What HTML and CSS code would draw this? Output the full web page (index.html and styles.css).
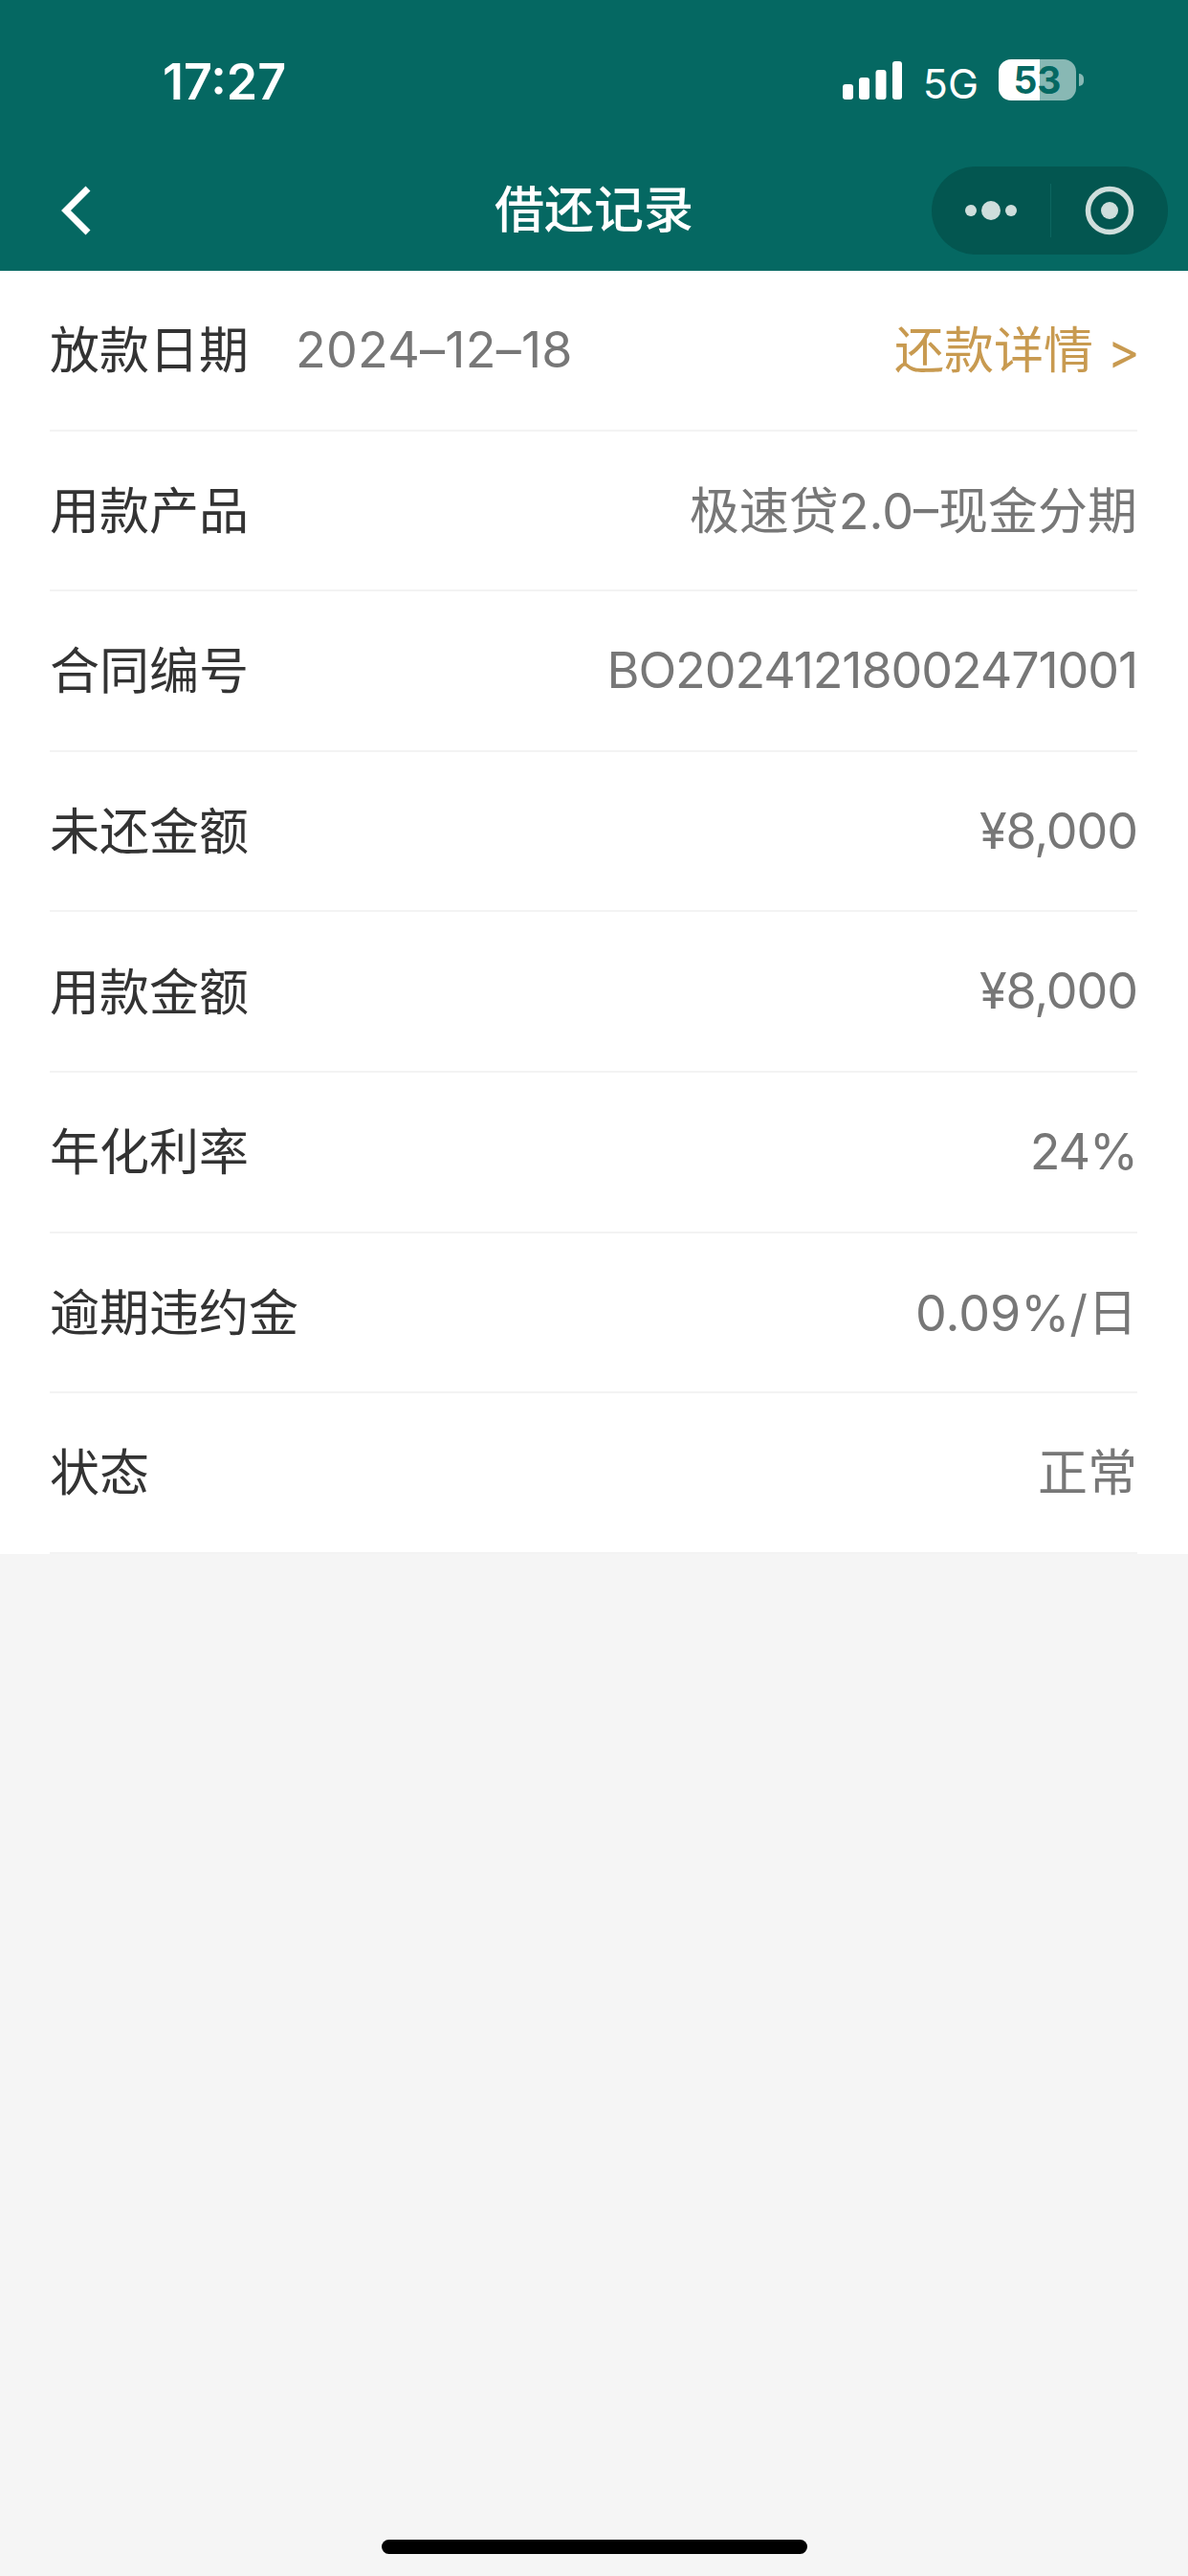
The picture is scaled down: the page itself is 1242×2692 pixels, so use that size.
FILE: index.html
```html
<!DOCTYPE html>
<html lang="zh-CN">
<head>
    <meta charset="UTF-8">
    <meta name="viewport" content="width=device-width, initial-scale=1.0">
    <title>借还记录</title>
    <link rel="stylesheet" href="styles.css">
</head>
<body>
    <div class="page">
        <header class="top">
            <div class="status-bar">
                <span class="time">17:27</span>
                <div class="status-right">
                    <svg class="signal" width="62" height="40" viewBox="0 0 62 40">
                        <rect x="0" y="24" width="11" height="16" rx="3"/>
                        <rect x="17" y="17" width="11" height="23" rx="3"/>
                        <rect x="34.5" y="9" width="11" height="31" rx="3"/>
                        <rect x="52" y="0" width="10" height="40" rx="3"/>
                    </svg>
                    <span class="net">5G</span>
                    <div class="battery"><span>53</span></div>
                    <div class="battery-nub"></div>
                </div>
            </div>
            <div class="nav-bar">
                <div class="nav-left">
                    <svg class="back" width="32" height="52" viewBox="0 0 32 52">
                        <path d="M28 3 L5 26 L28 49" fill="none" stroke="#fff" stroke-width="7"/>
                    </svg>
                </div>
                <div class="nav-title">借还记录</div>
                <div class="nav-right">
                    <div class="capsule">
                        <svg class="capsule-icons" width="247" height="92" viewBox="0 0 247 92">
                            <circle cx="41" cy="46" r="6" fill="#cfdedc"/>
                            <circle cx="62" cy="46" r="10" fill="#cfdedc"/>
                            <circle cx="83" cy="46" r="6" fill="#cfdedc"/>
                            <rect x="124" y="18" width="1" height="56" fill="#0c6660"/>
                            <circle cx="186" cy="46" r="22.5" fill="none" stroke="#cfdedc" stroke-width="5.5"/>
                            <circle cx="186" cy="46" r="9" fill="#cfdedc"/>
                        </svg>
                    </div>
                </div>
            </div>
        </header>

        <section class="list">
            <div class="row">
                <div class="row-left">
                    <span class="label">放款日期</span>
                    <span class="value date">2024–12–18</span>
                </div>
                <a class="link">还款详情 &gt;</a>
            </div>
            <div class="row">
                <span class="label">用款产品</span>
                <span class="value">极速贷2.0–现金分期</span>
            </div>
            <div class="row">
                <span class="label">合同编号</span>
                <span class="value num">BO20241218002471001</span>
            </div>
            <div class="row">
                <span class="label">未还金额</span>
                <span class="value num">¥8,000</span>
            </div>
            <div class="row">
                <span class="label">用款金额</span>
                <span class="value num">¥8,000</span>
            </div>
            <div class="row">
                <span class="label">年化利率</span>
                <span class="value num">24%</span>
            </div>
            <div class="row">
                <span class="label">逾期违约金</span>
                <span class="value">0.09%/日</span>
            </div>
            <div class="row">
                <span class="label">状态</span>
                <span class="value">正常</span>
            </div>
        </section>

        <div class="home-indicator"></div>
    </div>
</body>
</html>
```
FILE: styles.css
```css
* { box-sizing: border-box; }
body { margin: 0; background: #f5f5f5; font-family: Inter, "Noto Sans CJK SC", sans-serif; }
.page { display: flex; flex-direction: column; height: 2692px; overflow: hidden; }

.top { height: 283px; background: #056862; color: #fff; }
.status-bar { display: flex; justify-content: space-between; height: 174px; padding: 62px 109px 0 170px; }
.time { font-size: 52px; line-height: 50px; font-weight: 600; margin-top: -1px; }
.status-right { display: flex; align-items: flex-start; }
.signal { fill: #fff; margin-top: 2px; }
.net { font-size: 43px; line-height: 42px; margin: 4px -1px 0 22px; }
.battery { display: flex; align-items: center; justify-content: center; width: 81px; height: 43px; margin-left: 22px; border-radius: 13px; background: linear-gradient(90deg, #fff 53%, #88b8b4 53%); color: #056862; font-size: 39px; font-weight: 700; }
.battery-nub { width: 5px; height: 13px; margin: 15px 0 0 3px; border-radius: 0 5px 5px 0; background: #88b8b4; }

.nav-bar { display: grid; grid-template-columns: 1fr auto 1fr; align-items: center; height: 92px; }
.nav-left { padding-left: 64px; display: flex; }
.nav-title { font-size: 52px; line-height: 92px; font-weight: 500; }
.nav-right { display: flex; justify-content: flex-end; padding-right: 21px; }
.capsule { width: 247px; height: 92px; border-radius: 46px; background: #035650; }
.capsule-icons { display: block; }

.list { background: #fff; padding: 0 53px 0 52px; }
.row { display: flex; justify-content: space-between; align-items: center; height: 167.6px; padding-bottom: 6px; border-bottom: 2.5px solid #f3f3f3; font-size: 52px; }
.row-left { display: flex; align-items: center; gap: 49px; }
.label { color: #333; }
.value { color: #777; }
.date { letter-spacing: 0.25px; margin-top: 5px; }
.num { letter-spacing: -1.1px; margin-top: 5px; }
.link { color: #c89a50; margin-right: -3px; }

.home-indicator { width: 445px; height: 15px; margin: auto auto 23px; border-radius: 8px; background: #000; }
```
